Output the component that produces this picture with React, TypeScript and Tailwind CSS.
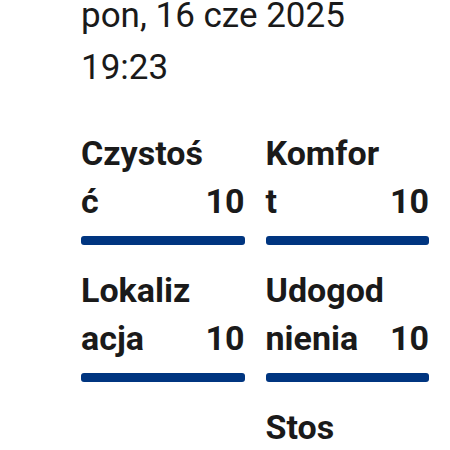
const scores = [
  { lines: ["Czystoś", "ć"], value: 10 },
  { lines: ["Komfor", "t"], value: 10 },
  { lines: ["Lokaliz", "acja"], value: 10 },
  { lines: ["Udogod", "nienia"], value: 10 },
];

function ScoreCell({ lines, value }: { lines: string[]; value: number }) {
  return (
    <div className="flex flex-col">
      <div className="flex items-end justify-between">
        <div className="flex flex-col">
          {lines.map((line) => (
            <span key={line}>{line}</span>
          ))}
        </div>
        <span>{value}</span>
      </div>
      <div className="mt-[11px] h-[9px] rounded-[3px] bg-[#003580]" />
    </div>
  );
}

export default function App() {
  return (
    <div className="min-h-[450px] bg-white pl-[81px] pr-[21px] text-[#1a1a1a] font-['Roboto',sans-serif] overflow-hidden">
      <div className="-mt-[10px] text-[35px] leading-[52px] font-normal">
        <p>pon, 16 cze 2025</p>
        <p>19:23</p>
      </div>
      <div className="mt-[35px] grid grid-cols-2 gap-[21px] text-[34px] leading-[48px] font-bold">
        {scores.map((s) => (
          <ScoreCell key={s.lines.join("")} lines={s.lines} value={s.value} />
        ))}
        <div />
        <div>Stos</div>
      </div>
    </div>
  );
}
